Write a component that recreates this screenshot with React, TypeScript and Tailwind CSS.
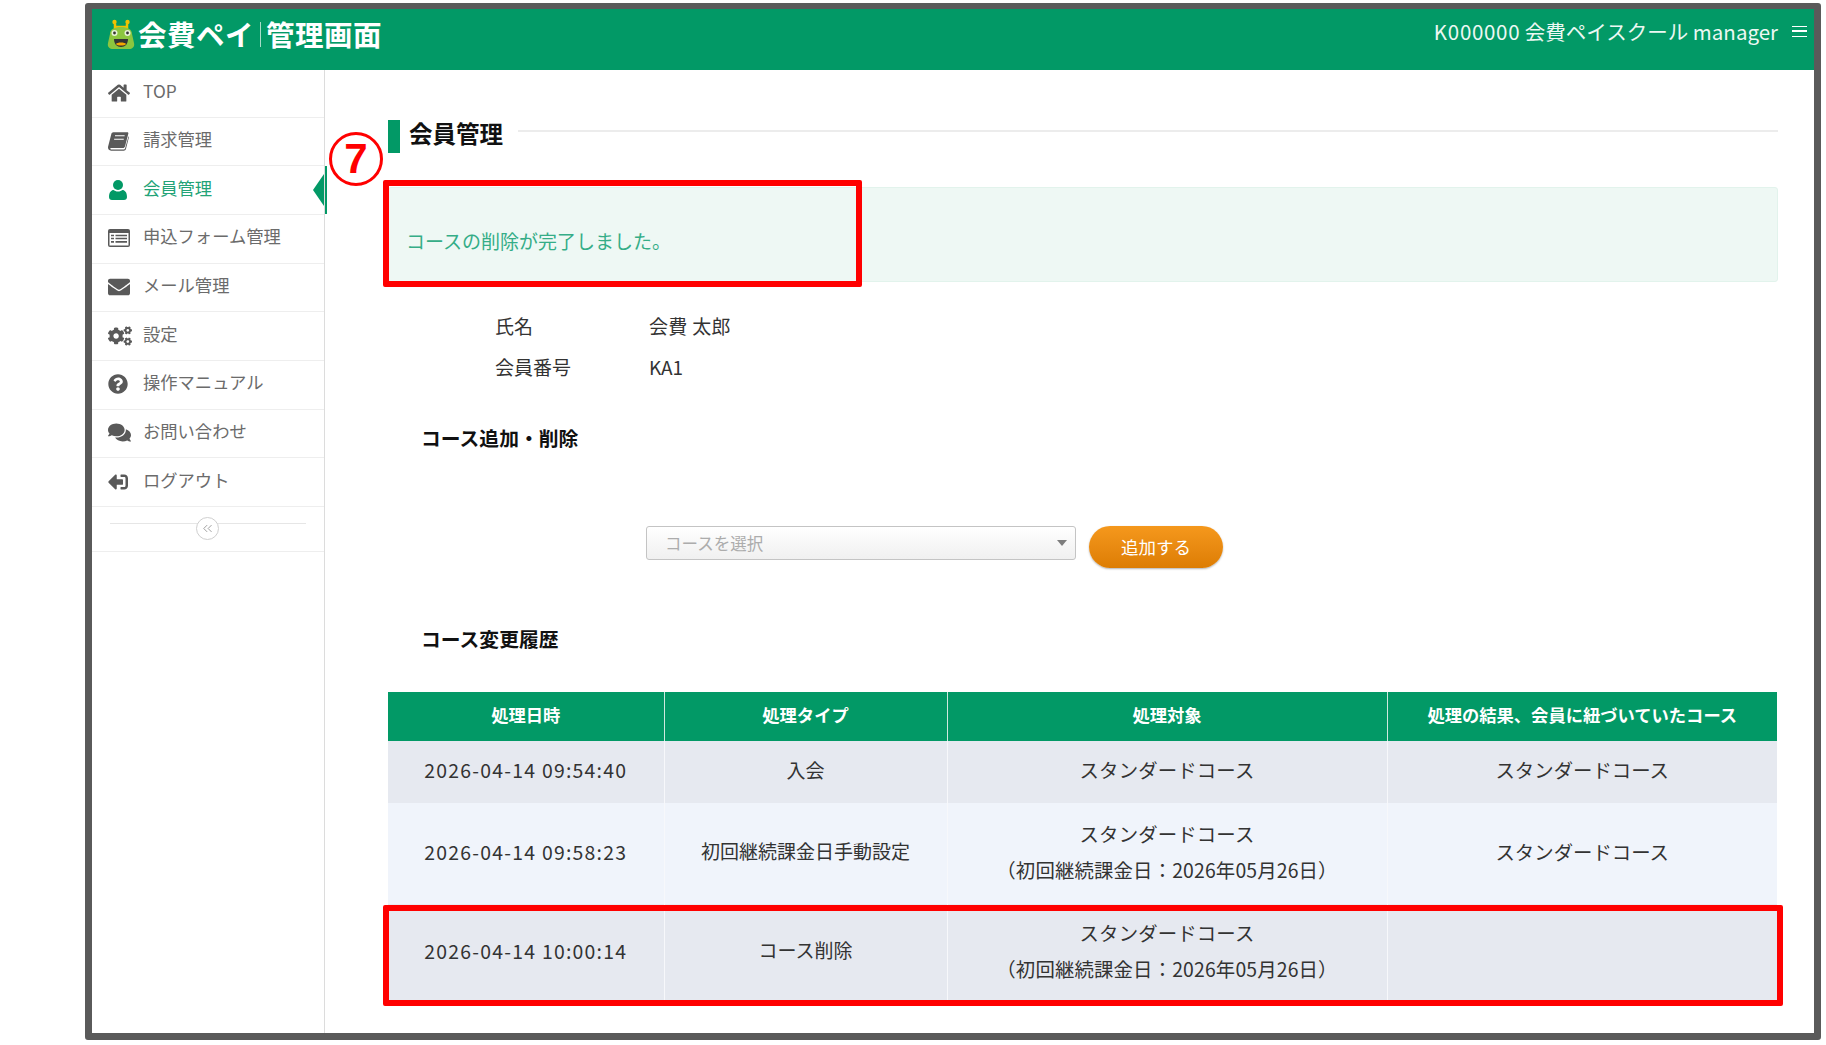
import React from "react";
import { FaHome, FaEnvelope, FaCogs, FaQuestionCircle, FaComments, FaSignOutAlt } from "react-icons/fa";
import { ChevronsLeft } from "lucide-react";

const font = { fontFamily: '"Noto Sans CJK JP", "Noto Sans", sans-serif' };

function BookIcon() {
  return (
    <svg viewBox="0 0 24 22" className="w-[21px] h-[20px]" fill="#595959">
      <path d="M6 1h16c1 0 1.500 .7 1.200 1.600L19.500 17c-.4 1.400-1.200 2-2.500 2H4c-1 0-1.600.5-1.300 1s1 .6 1.800.6h13.500c.8 0 1.200-.3 1.500-1L23.500 5.500l.5 1-3.500 13.700c-.4 1.200-1.300 1.800-2.500 1.800H3.500C1.500 22 0 20.500 0 18.500c0-.5.100-1 .2-1.400L3.800 3C4.100 1.800 5 1 6 1z" />
      <path d="M8 5h11M7 9h11" stroke="#fff" strokeWidth="1.400" />
    </svg>
  );
}

function UserIcon() {
  return (
    <svg viewBox="0 0 18 20" className="w-[18px] h-[20px] ml-[1px]" fill="#029966">
      <circle cx="9" cy="5" r="5" />
      <path d="M0 17c0-5 2.500-7 4.500-7 1 .9 2.700 1.500 4.500 1.500s3.500-.6 4.500-1.500c2 0 4.500 2 4.500 7 0 2-1.200 3-3 3H3c-1.800 0-3-1-3-3z" />
    </svg>
  );
}

function FormIcon() {
  return (
    <svg viewBox="0 0 22 18" className="w-[22px] h-[18px]">
      <rect x="0" y="0" width="22" height="18" rx="2" fill="#595959" />
      <rect x="1.500" y="4" width="19" height="12.500" fill="#fff" />
      <path d="M3 6.500h3M3 9.500h3M3 12.800h3M7.500 6.500H19M7.500 9.500H19M7.500 12.800H19" stroke="#595959" strokeWidth="1.700" />
    </svg>
  );
}

function Logo() {
  return (
    <svg viewBox="0 0 28 31" className="w-[28px] h-[31px] shrink-0">
      <path d="M8 10V5M20 10V5" stroke="#f2c200" strokeWidth="2.500" />
      <path d="M8 8h12" stroke="#f2c200" strokeWidth="2.500" />
      <circle cx="7.500" cy="3" r="2.200" fill="#f2c200" />
      <circle cx="20.500" cy="3" r="2.200" fill="#f2c200" />
      <path d="M3 15c0-5 5-7 11-7s11 2 11 7l2 9c1 4-2 6-5 6H6c-3 0-6-2-5-6z" fill="#8cc63f" />
      <circle cx="7.500" cy="14" r="3" fill="#e8f3d8" />
      <circle cx="20.500" cy="14" r="3" fill="#e8f3d8" />
      <circle cx="7.500" cy="14" r="1.400" fill="#333" />
      <circle cx="20.500" cy="14" r="1.400" fill="#333" />
      <path d="M7 20h14c0 5-3 8-7 8s-7-3-7-8z" fill="#333" />
      <path d="M9 25c1-2 9-2 10 0-1 2-9 2-10 0z" fill="#f5a800" />
    </svg>
  );
}

const nav: { label: string; icon: React.ReactNode; active?: boolean }[] = [
  { label: "TOP", icon: <FaHome size={22} /> },
  { label: "請求管理", icon: <BookIcon /> },
  { label: "会員管理", icon: <UserIcon />, active: true },
  { label: "申込フォーム管理", icon: <FormIcon /> },
  { label: "メール管理", icon: <FaEnvelope size={22} /> },
  { label: "設定", icon: <FaCogs size={24} /> },
  { label: "操作マニュアル", icon: <FaQuestionCircle size={20} /> },
  { label: "お問い合わせ", icon: <FaComments size={23} /> },
  { label: "ログアウト", icon: <FaSignOutAlt size={20} className="-scale-x-100" /> },
];

const rows = [
  { date: "2026-04-14 09:54:40", type: "入会", target: ["スタンダードコース"], result: "スタンダードコース", bg: "bg-[#e6e9f0]", h: "h-[62px]" },
  { date: "2026-04-14 09:58:23", type: "初回継続課金日手動設定", target: ["スタンダードコース", "（初回継続課金日：2026年05月26日）"], result: "スタンダードコース", bg: "bg-[#f0f4fb]", h: "h-[101px]" },
  { date: "2026-04-14 10:00:14", type: "コース削除", target: ["スタンダードコース", "（初回継続課金日：2026年05月26日）"], result: "", bg: "bg-[#e6e9f0]", h: "h-[97px]" },
];

export default function App() {
  return (
    <div className="relative w-[1826px] h-[1045px] bg-white overflow-hidden pl-[85px] pt-[3px]" style={font}>
      <div className="w-[1736px] h-[1037px] border-[7px] border-t-[6px] border-[#5a5a5a] rounded-[3px] flex flex-col bg-white">
        <header className="h-[61px] bg-[#029966] flex items-start shrink-0 text-white">
          <div className="flex items-center pl-[15px] pt-[7px]">
            <Logo />
            <span className="ml-[3px] text-[28.500px] leading-[36px] font-bold tracking-[0.500px] whitespace-nowrap">会費ペイ</span>
            <span className="ml-[6px] mr-[5px] w-[1px] h-[25px] bg-[#a8dcc8]" />
            <span className="text-[28.500px] leading-[36px] font-bold tracking-[0.500px] whitespace-nowrap">管理画面</span>
          </div>
          <div className="ml-auto flex items-center pt-[7px] pr-[7px]">
            <span className="text-[20.500px] leading-[30px] whitespace-nowrap text-[#ecf8f3]"><span className="tracking-[0.700px]">K000000</span> 会費ペイスクール manager</span>
            <span className="ml-[14px] w-[15px] h-[11px] border-y-[1.500px] border-white relative flex items-center">
              <span className="block w-full h-[1.500px] bg-white" />
            </span>
          </div>
        </header>
        <div className="flex flex-1 min-h-0">
          <aside className="w-[233px] shrink-0 border-r border-[#dcdcdc] relative">
            {nav.map((n, i) => (
              <div
                key={n.label}
                className={`relative flex items-center border-b-[1.500px] border-[#eeeeee] ${i === 0 ? "h-[47.500px]" : "h-[48.700px]"} ${n.active ? "text-[#22a377]" : "text-[#6b6b6b]"}`}
              >
                <span className={`w-[51px] pl-[16px] flex justify-start items-center -mt-[1px] ${n.active ? "text-[#029966]" : "text-[#595959]"}`}>{n.icon}</span>
                <span className="text-[17.300px] leading-[24px] whitespace-nowrap -mt-[5px]">{n.label}</span>
                {n.active && (
                  <>
                    <span className="absolute right-0 top-[8px] w-0 h-0 border-y-[16px] border-y-transparent border-r-[11px] border-r-[#029966]" />
                    <span className="absolute -right-[3px] top-0 w-[2px] h-full bg-[#029966]" />
                  </>
                )}
              </div>
            ))}
            <div className="relative h-[45px] border-b-[1.500px] border-[#eeeeee]">
              <div className="absolute left-[18px] right-[18px] top-[16px] h-px bg-[#e6e6e6]" />
              <div className="absolute left-[104px] top-[10px] w-[23px] h-[23px] rounded-full border border-[#cfcfcf] bg-white flex items-center justify-center text-[#a0a0a0]">
                <ChevronsLeft size={15} strokeWidth={1.6} />
              </div>
            </div>
          </aside>
          <main className="flex-1 pl-[63px] pr-[36px] pt-[50px] text-[#333333] min-w-0">
            <div className="flex items-start h-[33px]">
              <span className="w-[12px] h-[33px] bg-[#029966] shrink-0" />
              <span className="ml-[9px] -mt-[2px] text-[23.500px] leading-[30px] font-bold text-[#111111] whitespace-nowrap">会員管理</span>
              <span className="ml-[15px] flex-1 h-[1.500px] mt-[10px] bg-[#ececec]" />
            </div>
            <div className="mt-[34px] h-[95px] bg-[#eef8f4] border border-[#e2f3ec] rounded-[3px] flex items-end pl-[17px] pb-[26px]">
              <span className="text-[19px] leading-[28px] text-[#35ad87]">コースの削除が完了しました。</span>
            </div>
            <div className="mt-[24px] pl-[107px] text-[19px]">
              <div className="flex items-center h-[41px]">
                <span className="w-[154px]">氏名</span>
                <span className="tracking-[0.300px]">会費 太郎</span>
              </div>
              <div className="flex items-center h-[41px]">
                <span className="w-[154px]">会員番号</span>
                <span>KA1</span>
              </div>
            </div>
            <h2 className="mt-[36px] pl-[33px] text-[19.800px] leading-[28px] font-bold text-[#111111]">コース追加・削除</h2>
            <div className="mt-[74px] pl-[258px] flex items-start">
              <div className="w-[430px] h-[34px] rounded-[3px] border border-[#c4c4c4] bg-gradient-to-b from-white to-[#f0f0f0] flex items-center pl-[18px] pr-[8px]">
                <span className="text-[16.500px] text-[#acacac] leading-[24px]">コースを選択</span>
                <span className="ml-auto w-0 h-0 border-x-[5px] border-x-transparent border-t-[6px] border-t-[#7d7d7d]" />
              </div>
              <button className="ml-[13px] w-[134px] h-[42px] rounded-full bg-gradient-to-b from-[#f5981c] to-[#dd7d03] text-white text-[17.500px] leading-[26px] shadow-[0_1px_2px_rgba(0,0,0,0.3)]">追加する</button>
            </div>
            <h2 className="mt-[57px] pl-[33px] text-[19.800px] leading-[28px] font-bold text-[#111111]">コース変更履歴</h2>
            <table className="mt-[39px] w-[1389px] table-fixed border-collapse text-[#333333]">
              <colgroup>
                <col className="w-[276px]" />
                <col className="w-[283px]" />
                <col className="w-[440px]" />
                <col className="w-[390px]" />
              </colgroup>
              <thead>
                <tr className="h-[49px] bg-[#029966] text-white text-[17.300px]">
                  {["処理日時", "処理タイプ", "処理対象", "処理の結果、会員に紐づいていたコース"].map((t, i) => (
                    <th key={t} className={`font-bold whitespace-nowrap pb-[4px] ${i < 3 ? "border-r border-[#cfe9df]" : ""}`}>{t}</th>
                  ))}
                </tr>
              </thead>
              <tbody className="text-[19.400px]">
                {rows.map((r) => (
                  <tr key={r.date} className={`${r.bg} ${r.h} text-center`}>
                    <td className="border-r border-[#f7f8fb] tracking-[1.250px] pb-[4px]">{r.date}</td>
                    <td className="border-r border-[#f7f8fb] pb-[4px] text-[19px]">{r.type}</td>
                    <td className="border-r border-[#f7f8fb] leading-[36px] tracking-[0.150px] pb-[4px]">
                      {r.target.map((t) => (
                        <div key={t}>{t}</div>
                      ))}
                    </td>
                    <td className="pb-[4px]">{r.result}</td>
                  </tr>
                ))}
              </tbody>
            </table>
          </main>
        </div>
      </div>
      {/* annotations over the screenshot */}
      <div className="absolute left-[383px] top-[180px] w-[479px] h-[107px] border-[6px] border-[#ff0000] rounded-[2px]" />
      <div className="absolute left-[383px] top-[905px] w-[1400px] h-[101px] border-[6px] border-[#ff0000] rounded-[2px]" />
      <div className="absolute left-[329px] top-[132px] w-[54px] h-[54px] rounded-full border-[3px] border-[#ff0000] bg-white flex items-center justify-center text-[#ff0000] text-[42px] font-bold leading-none" style={{ fontFamily: '"Liberation Sans", sans-serif' }}>7</div>
    </div>
  );
}
